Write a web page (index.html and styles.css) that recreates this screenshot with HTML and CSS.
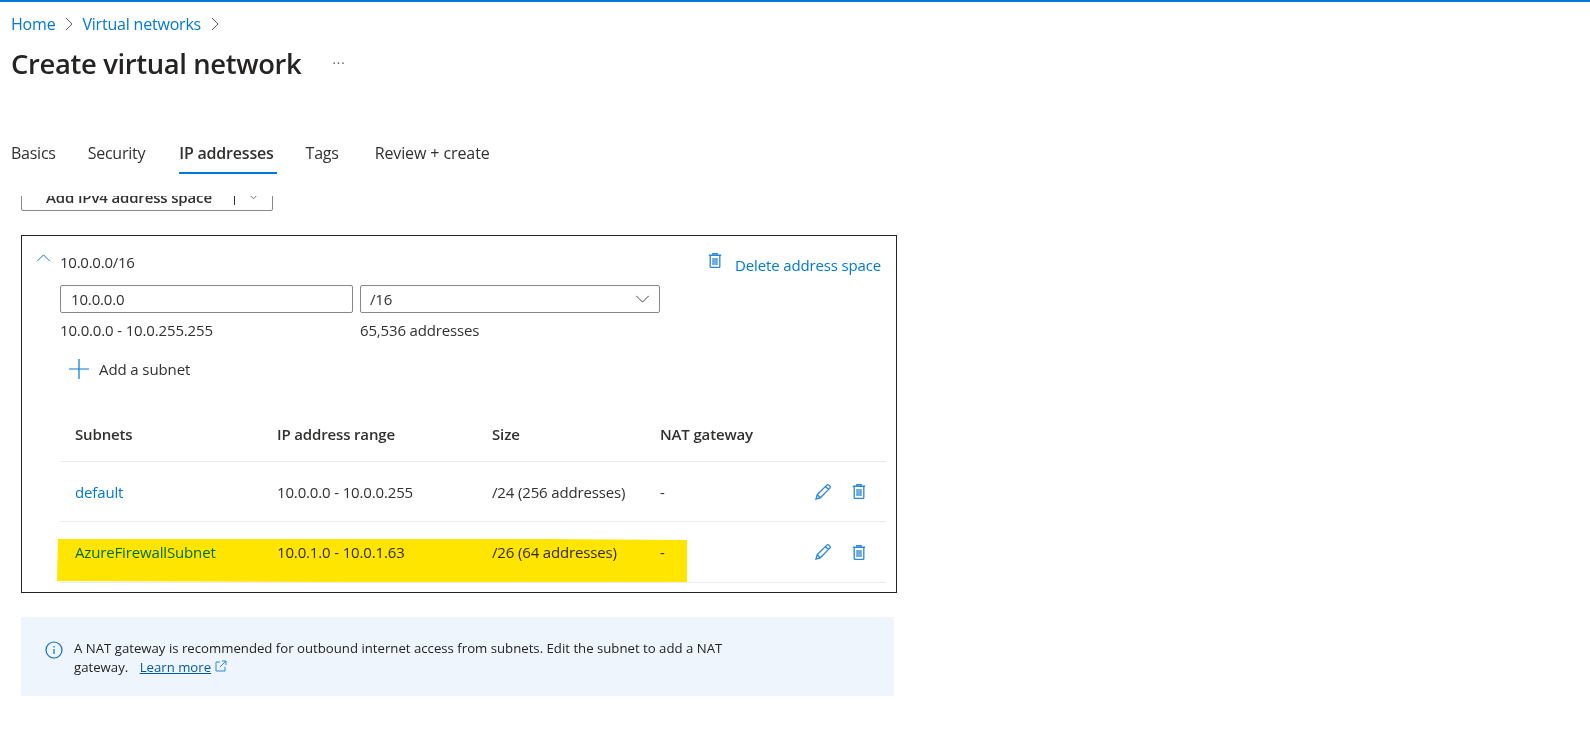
FILE: index.html
```html
<!DOCTYPE html>
<html lang="en">

<head>
  <meta charset="UTF-8" />
  <title>Create virtual network</title>
  <link rel="stylesheet" href="styles.css">
</head>

<body>
  <svg class="defs" width="0" height="0">
    <symbol id="trash" viewBox="0 0 16 18">
      <path d="M1 3h14M5.500 3V1.200h5V3M2.500 3v12.800q0 1 1 1h9q1 0 1-1V3M5.800 6v8M8 6v8M10.200 6v8" fill="none" stroke="currentColor" stroke-width="1.500" />
    </symbol>
    <symbol id="pencil" viewBox="0 0 16 16">
      <path d="M1 15l1.200-4.300L11.800 1.100q.9-.8 1.900-.1l1.200 1.200q.8 1-.1 1.900L5.300 13.800zM2.200 10.700l3.100 3.100M10.500 2.500l3 3" fill="none" stroke="currentColor" stroke-width="1.300" />
    </symbol>
  </svg>

  <div class="topbar"></div>

  <nav class="crumbs">
    <a>Home</a>
    <svg class="crumb-sep" viewBox="0 0 8 14"><path d="M1 1l6 6-6 6" /></svg>
    <a>Virtual networks</a>
    <svg class="crumb-sep" viewBox="0 0 8 14"><path d="M1 1l6 6-6 6" /></svg>
  </nav>

  <div class="title-row">
    <h1>Create virtual network</h1>
    <span class="more">···</span>
  </div>

  <div class="tabs">
    <span class="tab">Basics</span>
    <span class="tab">Security</span>
    <span class="tab active">IP addresses</span>
    <span class="tab">Tags</span>
    <span class="tab last">Review + create</span>
  </div>

  <main class="content">
    <div class="clip">
      <div class="add-btn">
        <b>Add IPv4 address space</b>
        <i class="btn-sep"></i>
        <svg class="btn-chev" viewBox="0 0 10 6"><path d="M1 1l4 4 4-4" /></svg>
      </div>
    </div>

    <section class="space">
      <div class="space-head">
        <svg class="collapse" viewBox="0 0 16 9"><path d="M1 8l7-7 7 7" /></svg>
        <span class="space-name">10.0.0.0/16</span>
        <svg class="icon head-trash"><use href="#trash" /></svg>
        <a class="delete">Delete address space</a>
      </div>

      <div class="fields">
        <div class="field ip">10.0.0.0</div>
        <div class="field mask">/16
          <svg class="sel-chev" viewBox="0 0 16 9"><path d="M1 1l7 7 7-7" /></svg>
        </div>
      </div>

      <div class="fields-info">
        <span class="range">10.0.0.0 - 10.0.255.255</span>
        <span>65,536 addresses</span>
      </div>

      <div class="add-subnet">
        <svg class="plus" viewBox="0 0 20 20"><path d="M10 0v20M0 10h20" /></svg>
        Add a subnet
      </div>

      <div class="row head">
        <span class="c1">Subnets</span>
        <span class="c2">IP address range</span>
        <span class="c3">Size</span>
        <span class="c4">NAT gateway</span>
      </div>
      <div class="row first">
        <a class="c1">default</a>
        <span class="c2">10.0.0.0 - 10.0.0.255</span>
        <span class="c3">/24 (256 addresses)</span>
        <span class="c4">-</span>
        <svg class="icon pen"><use href="#pencil" /></svg>
        <svg class="icon bin"><use href="#trash" /></svg>
      </div>
      <div class="row marked">
        <a class="c1">AzureFirewallSubnet</a>
        <span class="c2">10.0.1.0 - 10.0.1.63</span>
        <span class="c3">/26 (64 addresses)</span>
        <span class="c4">-</span>
        <svg class="icon pen"><use href="#pencil" /></svg>
        <svg class="icon bin"><use href="#trash" /></svg>
        <!-- marker stroke drawn over the row -->
        <svg class="marker" viewBox="0 0 630 44" preserveAspectRatio="none"><path d="M1 0H480L630 1V44H300L0 43z" /></svg>
      </div>
    </section>

    <div class="info">
      <svg class="info-icon" viewBox="0 0 18 18">
        <circle cx="9" cy="9" r="8" />
        <path d="M9 8v5M9 5v1.400" />
      </svg>
      <p>A NAT gateway is recommended for outbound internet access from subnets. Edit the subnet to add a NAT gateway.
        <a class="learn">Learn more</a>
        <svg class="ext" viewBox="0 0 12 12"><path d="M5 2H1v9h9V7M7 1h4v4M11 1L5 7" /></svg>
      </p>
    </div>
  </main>
</body>

</html>
```

FILE: styles.css
```css
* {
  box-sizing: border-box;
}

body {
  margin: 0;
  font-family: 'Open Sans', 'Noto Sans', sans-serif;
  font-size: 15px;
  color: #323130;
  background: #fff;
  overflow: hidden;
}

a {
  color: #0078d4;
}

.defs {
  display: block;
  height: 0;
}

.topbar {
  height: 2px;
  background: #0078d4;
}

.crumbs {
  display: flex;
  align-items: center;
  height: 44px;
  padding-left: 11px;
  font-size: 16px;
  letter-spacing: -0.200px;
}

.crumb-sep {
  width: 8px;
  height: 14px;
  margin: 0 9px 0 10px;
  fill: none;
  stroke: #605e5c;
}

.title-row {
  display: flex;
  align-items: center;
  height: 34px;
  padding-left: 11px;
}

h1 {
  margin: 0;
  font-size: 27.400px;
  font-weight: 600;
  letter-spacing: -0.350px;
  color: #252423;
}

.more {
  margin-left: 31px;
  font-size: 13px;
  letter-spacing: 1px;
  color: #605e5c;
}

.tabs {
  display: flex;
  gap: 32px;
  height: 65px;
  margin-top: 29px;
  padding: 24px 0 0 11px;
  font-size: 16px;
  letter-spacing: -0.250px;
}

.tab {
  height: 41px;
  padding-top: 8px;
  line-height: 24px;
}

.tab.active {
  margin: 0 -3px 0 2px;
  padding-right: 3px;
  font-weight: 600;
  letter-spacing: -0.200px;
  border-bottom: 2px solid #0078d4;
}

.tab.last {
  margin-left: 4px;
  letter-spacing: -0.100px;
}

.content {
  padding-left: 21px;
}

.clip {
  display: flex;
  align-items: flex-end;
  height: 15px;
  margin-top: 22px;
  overflow: hidden;
}

.add-btn {
  display: flex;
  flex: none;
  align-items: center;
  width: 252px;
  height: 32px;
  padding: 3px 0 0 24px;
  border: 1px solid #8a8886;
  border-radius: 2px;
  font-size: 15px;
  letter-spacing: -0.150px;
}

.add-btn b {
  font-weight: 600;
}

.btn-sep {
  width: 1px;
  height: 16px;
  margin-left: 22px;
  background: #323130;
}

.btn-chev {
  width: 9px;
  height: 6px;
  margin-left: 14px;
  fill: none;
  stroke: #605e5c;
}

.space {
  width: 876px;
  height: 358px;
  margin-top: 24px;
  padding: 0 10px 0 38px;
  border: 1px solid #252423;
}

.space-head {
  display: flex;
  align-items: center;
  height: 49px;
}

.collapse {
  width: 15px;
  height: 8px;
  margin: 0 9px 6px -24px;
  fill: none;
  stroke: #0078d4;
  stroke-width: 1.100;
}

.space-name {
  margin-top: 2px;
  letter-spacing: -0.250px;
}

.icon {
  flex: none;
  color: #2b88d8;
}

.head-trash {
  width: 14px;
  height: 17px;
  margin: 0 13px 1px auto;
}

.delete {
  margin: 8px 5px 0 0;
  letter-spacing: -0.150px;
}

.fields {
  display: flex;
  gap: 7px;
}

.field {
  position: relative;
  height: 28px;
  border: 1px solid #8a8886;
  border-radius: 2px;
  line-height: 26px;
  letter-spacing: -0.150px;
}

.ip {
  width: 293px;
  padding-left: 10px;
}

.mask {
  display: flex;
  align-items: center;
  justify-content: space-between;
  width: 300px;
  padding: 0 9px;
}

.sel-chev {
  width: 15px;
  height: 8px;
  fill: none;
  stroke: #323130;
}

.fields-info {
  display: flex;
  height: 38px;
  padding-top: 7px;
  letter-spacing: -0.150px;
}

.range {
  width: 300px;
}

.add-subnet {
  display: flex;
  align-items: center;
  gap: 10px;
  height: 36px;
  padding-left: 9px;
  letter-spacing: -0.100px;
}

.plus {
  width: 20px;
  height: 20px;
  fill: none;
  stroke: #0078d4;
  stroke-width: 1.200;
}

.row {
  position: relative;
  display: flex;
  align-items: center;
  width: 826px;
  height: 61px;
  border-bottom: 1px solid #edebe9;
  letter-spacing: -0.150px;
}

.row.head {
  height: 61px;
  margin-top: 14px;
  padding-top: 5px;
  font-weight: 600;
}

.row.first {
  height: 60px;
}

.c1 {
  width: 217px;
  padding-left: 15px;
}

.c2 {
  width: 215px;
}

.c3 {
  width: 168px;
}

.c4 {
  width: 100px;
}

.pen {
  width: 16px;
  height: 16px;
  margin-left: 55px;
}

.bin {
  width: 14px;
  height: 17px;
  margin-left: 21px;
}

.marker {
  position: absolute;
  left: -3px;
  bottom: 0;
  width: 630px;
  height: 43px;
  fill: #ffe500;
  mix-blend-mode: multiply;
}

.info {
  display: flex;
  gap: 11px;
  width: 873px;
  height: 79px;
  margin-top: 24px;
  padding: 22px 24px;
  background: #eef5fd;
  font-size: 13.200px;
  color: #252423;
}

.info p {
  width: 660px;
  margin: 0;
  line-height: 19px;
}

.info-icon {
  flex: none;
  width: 18px;
  height: 18px;
  margin-top: 2px;
  fill: none;
  stroke: #0f6cbd;
  stroke-width: 1.200;
}

.learn {
  margin-left: 8px;
  color: #005a9e;
  text-decoration: underline;
}

.ext {
  width: 12px;
  height: 12px;
  fill: none;
  stroke: #2b88d8;
}
```
